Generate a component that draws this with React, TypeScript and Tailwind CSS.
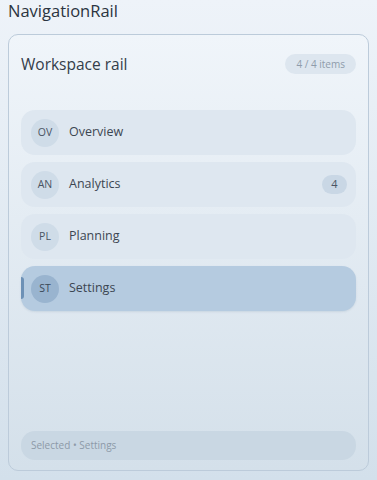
import React from 'react';

const items = [
  { code: 'OV', label: 'Overview' },
  { code: 'AN', label: 'Analytics', count: 4 },
  { code: 'PL', label: 'Planning' },
  { code: 'ST', label: 'Settings' },
];

export default function App() {
  const selected = 'Settings';

  return (
    <div
      className="h-[480px] w-full overflow-hidden bg-gradient-to-b from-[#eef3f9] to-[#d3e0eb] px-2"
      style={{ fontFamily: '"Open Sans", "Noto Sans", sans-serif' }}
    >
      <h1 className="text-[16.5px] leading-[22px] text-[#2b3440]">NavigationRail</h1>

      <div className="mt-[12px] flex h-[437px] flex-col rounded-[10px] border border-[#bccbda] bg-gradient-to-b from-[#f0f5fa] to-[#d4e0ea] px-3 pt-[17px] pb-[10px]">
        {/* Header */}
        <div className="flex items-center justify-between">
          <h2 className="text-[15.5px] leading-[24px] text-[#333d49]">Workspace rail</h2>
          <span className="rounded-full bg-[#dde6ef] px-[11px] py-[3px] text-[10px] leading-[14px] text-[#8f9cab]">
            4 / 4 items
          </span>
        </div>

        {/* Items */}
        <nav className="mt-[34px] flex flex-col gap-[7px]">
          {items.map((item) => {
            const active = item.label === selected;
            return (
              <div
                key={item.code}
                className={`relative flex h-[45px] items-center rounded-[14px] pl-[10px] pr-[9px] ${
                  active ? 'bg-[#b5cbe0] shadow-[0_1px_2px_rgba(90,120,150,0.15)]' : 'bg-[#dee7f0]'
                }`}
              >
                {active && (
                  <span className="absolute left-0 top-[11px] h-[22px] w-[3px] rounded-r bg-[#6d91b6]" />
                )}
                <span
                  className={`flex h-[28px] w-[28px] items-center justify-center rounded-full text-[10.5px] ${
                    active ? 'bg-[#99b4cf] text-[#3a4857]' : 'bg-[#cfdce8] text-[#4a5563]'
                  }`}
                >
                  {item.code}
                </span>
                <span className="ml-[10px] text-[12.5px] text-[#3c4652]">{item.label}</span>
                {item.count !== undefined && (
                  <span className="ml-auto flex h-[19px] min-w-[25px] items-center justify-center rounded-full bg-[#c9d7e5] px-2 text-[11px] text-[#4a5563]">
                    {item.count}
                  </span>
                )}
              </div>
            );
          })}
        </nav>

        {/* Footer */}
        <div className="mt-auto flex h-[29px] items-center rounded-[14px] bg-[#c9d7e3] px-[10px] text-[10px] text-[#8d9aa8]">
          Selected • Settings
        </div>
      </div>
    </div>
  );
}
